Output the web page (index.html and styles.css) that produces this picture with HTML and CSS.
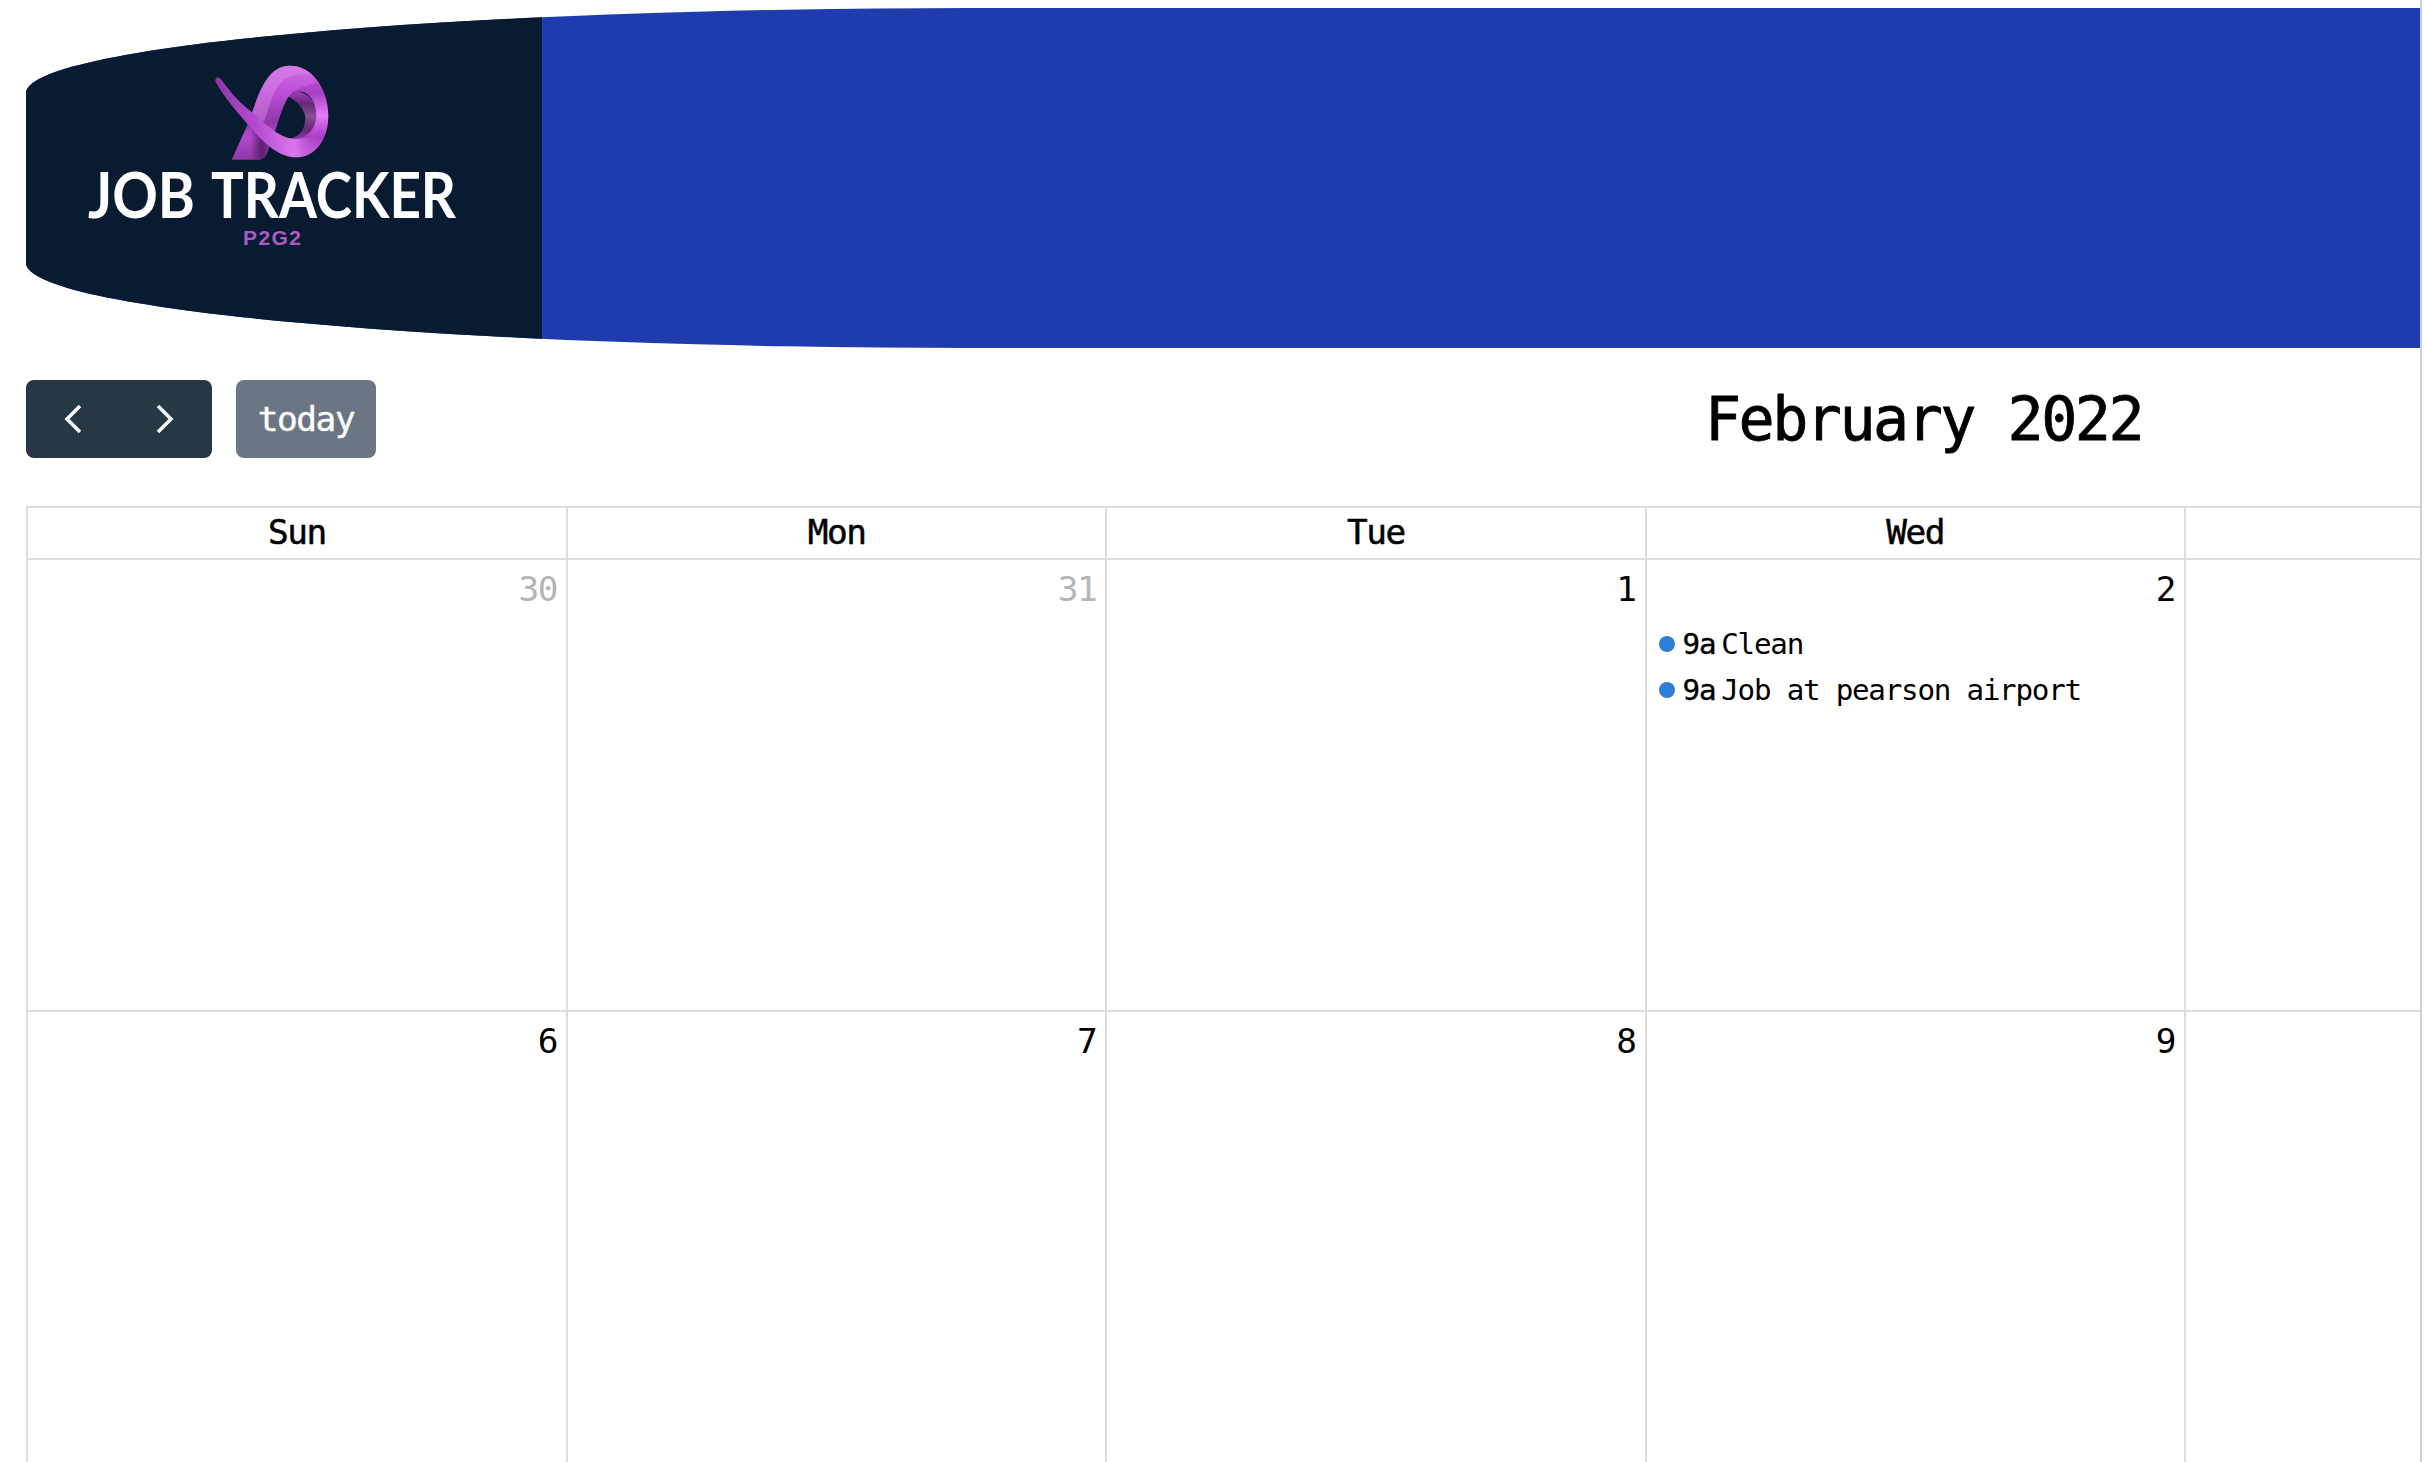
FILE: index.html
```html
<!DOCTYPE html>
<html lang="en">
<head>
<meta charset="utf-8">
<title>Job Tracker</title>
<link rel="stylesheet" href="styles.css">
</head>
<body>
<div class="viewport">
  <div class="page">
    <header class="banner">
      <svg class="logo" viewBox="26 8 516 340" role="img" aria-label="Job Tracker P2G2">
        <defs>
          <linearGradient id="stem" x1="0" y1="0" x2="0" y2="1">
            <stop offset="0" stop-color="#cf6ce2"/><stop offset=".3" stop-color="#bd4dd6"/><stop offset=".6" stop-color="#8d38a8"/><stop offset=".75" stop-color="#b748d0"/><stop offset="1" stop-color="#8d38a8"/>
          </linearGradient>
          <linearGradient id="loop" x1="0" y1="0" x2="0" y2="1">
            <stop offset="0" stop-color="#c75cdd"/><stop offset=".3" stop-color="#a93fc4"/><stop offset=".54" stop-color="#e67bf8"/><stop offset=".78" stop-color="#a83cc4"/><stop offset="1" stop-color="#cc65e0"/>
          </linearGradient>
          <linearGradient id="inner" x1="0" y1="0" x2="0" y2="1">
            <stop offset="0" stop-color="#a03cba"/><stop offset=".25" stop-color="#682878"/><stop offset=".5" stop-color="#8b4d98"/><stop offset=".8" stop-color="#642673"/><stop offset="1" stop-color="#963bad"/>
          </linearGradient>
          <linearGradient id="tail" x1="0" y1="0" x2="1" y2="0">
            <stop offset="0" stop-color="#8c35a4"/><stop offset=".38" stop-color="#b84ad2"/><stop offset=".74" stop-color="#d878ec"/><stop offset=".96" stop-color="#b64acd" stop-opacity="0"/>
          </linearGradient>
          <linearGradient id="shade" x1="0" y1="0" x2="1" y2="0">
            <stop offset="0" stop-color="#5c216c" stop-opacity="0"/><stop offset=".55" stop-color="#5c216c"/><stop offset="1" stop-color="#8d38a8"/>
          </linearGradient>
        </defs>
        <g transform="translate(200 50) scale(.33333)">
          <path fill="url(#inner)" d="M262 138C285 110 350 130 352 195C352 245 320 285 272 266C300 260 316 235 316 205C316 180 295 155 262 138Z"/>
          <path fill="url(#loop)" d="M268 47C340 47 385 120 385 197C385 270 345 322 288 322L275 266C325 270 349 230 349 195C349 150 320 112 280 128L240 70Z"/>
          <path fill="url(#stem)" d="M95 329L150 208C172 140 200 47 268 47C305 47 335 65 352 95C335 108 290 105 266 140C250 163 240 200 228 235L204 300C198 320 190 329 175 329Z"/>
          <path fill="#dc8be9" opacity=".45" d="M152 200C174 135 200 47 268 47C295 47 318 57 334 75C265 62 230 100 214 150L192 213L178 218Z"/>
          <path fill="url(#shade)" d="M155 235L215 275L204 300C198 320 190 329 175 329L150 329Z"/>
          <path fill="url(#tail)" d="M47 96C42 82 56 78 63 88C92 128 122 162 160 190C198 222 236 262 278 266C315 270 345 255 368 270C350 303 322 322 288 322C230 320 188 274 145 225C108 182 75 145 47 96Z"/>
        </g>
        <text class="logo-name" x="88" y="218" textLength="107" lengthAdjust="spacingAndGlyphs">JOB</text>
        <text class="logo-name" x="211" y="218" textLength="245" lengthAdjust="spacingAndGlyphs">TRACKER</text>
        <text class="logo-team" x="243" y="245" textLength="58">P2G2</text>
      </svg>
    </header>

    <div class="toolbar">
      <div class="controls">
        <div class="nav">
          <button class="nav-button" aria-label="Previous month"><svg class="chevron" viewBox="0 0 20 32"><path d="M17 3L4 16L17 29"/></svg></button>
          <button class="nav-button" aria-label="Next month"><svg class="chevron" viewBox="0 0 20 32"><path d="M2 3L15 16L2 29"/></svg></button>
        </div>
        <button class="today">today</button>
      </div>
      <h1 class="title">February 2022</h1>
      <div class="views"></div>
    </div>

    <div class="calendar">
      <div class="weekday">Sun</div><div class="weekday">Mon</div><div class="weekday">Tue</div><div class="weekday">Wed</div><div class="weekday"></div><div class="weekday"></div><div class="weekday"></div>
      <div class="day other">30</div>
      <div class="day other">31</div>
      <div class="day">1</div>
      <div class="day">2
        <div class="events">
          <div class="event"><i class="dot"></i><span class="time">9a</span><span>Clean</span></div>
          <div class="event"><i class="dot"></i><span class="time">9a</span><span>Job at pearson airport</span></div>
        </div>
      </div>
      <div class="day"></div><div class="day"></div><div class="day"></div>
      <div class="day">6</div><div class="day">7</div><div class="day">8</div><div class="day">9</div><div class="day"></div><div class="day"></div><div class="day"></div>
    </div>
  </div>
</div>
</body>
</html>
```
FILE: styles.css
```css
* { box-sizing: border-box; }

body {
  margin: 0;
  background: #fff;
  color: #000;
  font: 34.4px/40px "DejaVu Sans Mono", monospace;
  letter-spacing: -1.45px;
}

.viewport {
  width: 2422px;
  height: 1462px;
  overflow: hidden;
  border-right: 2px solid #c8d2da;
}

.page {
  width: 3804px;
  padding: 8px 0 0 26px;
}

.banner {
  width: 3776px;
  height: 340px;
  overflow: hidden;
  border-radius: 25%;
  background: #1f3cae;
}

.logo {
  display: block;
  width: 516px;
  height: 340px;
  background: #081b30;
}

.logo-name {
  fill: #fff;
  font: 700 64px Lato, sans-serif;
  letter-spacing: 0;
}

.logo-team {
  fill: #aa5bc8;
  font: 700 21px "Liberation Sans", sans-serif;
  letter-spacing: 0;
}

.toolbar {
  display: grid;
  grid-template-columns: 1679px 1fr auto;
  align-items: center;
  height: 78px;
  margin: 32px 0 48px;
}

.controls {
  display: flex;
  gap: 24px;
}

.nav {
  display: flex;
  width: 186px;
  height: 78px;
  border-radius: 8px;
  background: #283746;
}

.nav-button {
  display: flex;
  flex: 1;
  align-items: center;
  justify-content: center;
  padding: 0;
  border: 0;
  background: none;
}

.chevron {
  width: 20px;
  height: 32px;
  fill: none;
  stroke: #fff;
  stroke-width: 3.5;
}

.today {
  width: 140px;
  height: 78px;
  padding: 0;
  border: 0;
  border-radius: 8px;
  background: #6b7682;
  color: #fff;
  font: inherit;
  letter-spacing: inherit;
  -webkit-text-stroke: .4px #fff;
}

.title {
  margin: 0;
  font-size: 60px;
  font-weight: 400;
  line-height: 78px;
  letter-spacing: -2.5px;
  -webkit-text-stroke: .8px #000;
}

.calendar {
  display: grid;
  grid-template-columns: 540px repeat(6, 539.3px);
  grid-template-rows: 52px 452px 452px;
  width: 3778px;
  border-top: 2px solid #dcdcdc;
  border-left: 2px solid #dcdcdc;
}

.weekday,
.day {
  border-right: 2px solid #dcdcdc;
  border-bottom: 2px solid #dcdcdc;
}

.weekday {
  padding-top: 4px;
  text-align: center;
  -webkit-text-stroke: .5px #000;
}

.day {
  padding: 9px 9px 0 0;
  text-align: right;
}

.other {
  color: #b5b5b5;
}

.events {
  padding: 12px 0 0 12px;
  font-size: 29.2px;
  letter-spacing: -1.23px;
}

.event {
  display: flex;
  align-items: center;
  height: 46px;
}

.dot {
  width: 16px;
  height: 16px;
  margin-right: 8px;
  border-radius: 50%;
  background: #2f7ed8;
}

.time {
  margin-right: 6px;
  -webkit-text-stroke: .4px #000;
}
```
